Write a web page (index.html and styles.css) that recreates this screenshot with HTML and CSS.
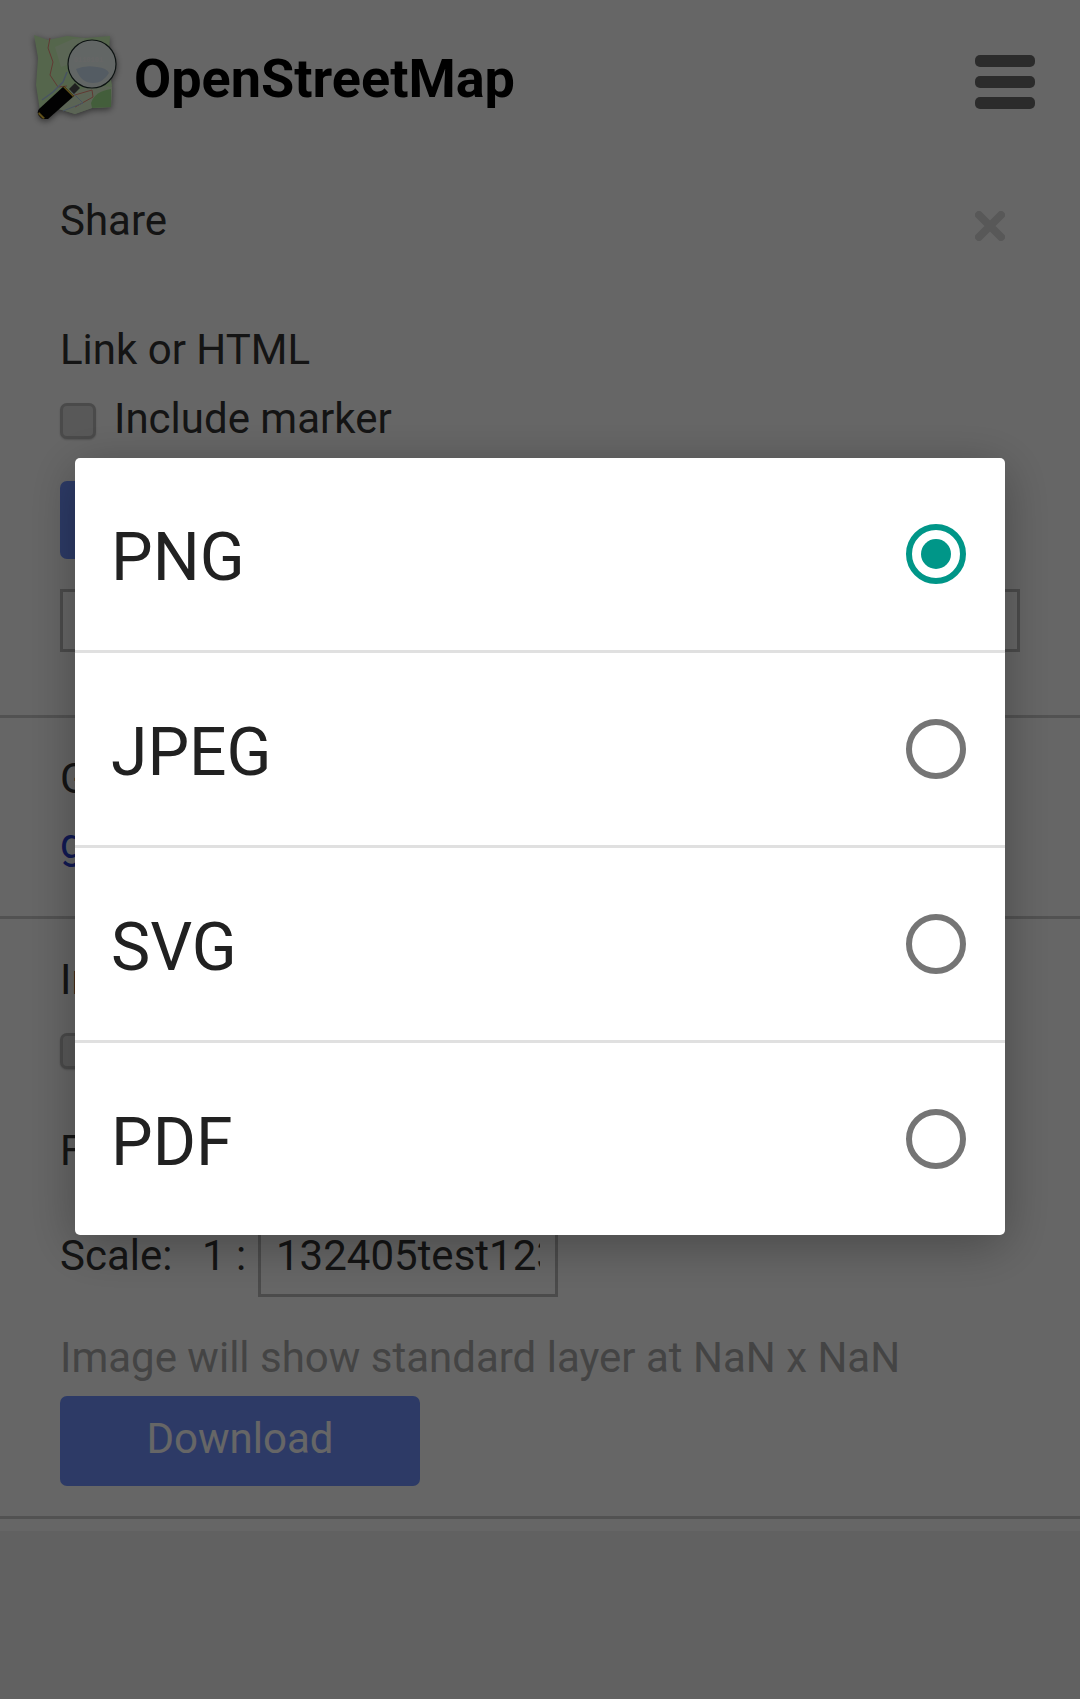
FILE: index.html
```html
<!DOCTYPE html>
<html lang="en">
<head>
<meta charset="UTF-8" />
<meta name="viewport" content="width=device-width, initial-scale=1.0" />
<title>OpenStreetMap</title>
<link rel="stylesheet" href="styles.css">
</head>
<body>

<div class="page">

<header class="top">
  <div class="brand">
    <svg class="logo" viewBox="0 0 84 86" width="84" height="86">
      <path d="M1 2 L15 7 L34 3 L52 5 L77 3 L75 32 L79 52 L78 74 L59 75 L42 81 L22 75 L7 78 L3 52 L5 25 Z" fill="#d4ffbe"/>
      <path d="M22 14 L40 6 L52 5 L40 30 L28 34 Z" fill="#e4ffd4"/>
      <path d="M36 62 L58 52 L79 54 L78 74 L59 75 L42 81 L26 76 Z" fill="#e4fbd4"/>
      <path d="M58 70 Q62 58 78 56 L78 74 L59 75 Z" fill="#a8ec94"/>
      <path d="M17 5 L15 15 L20 29 L17 42 L25 54 L34 53" fill="none" stroke="#f09080" stroke-width="1"/>
      <path d="M35 64 L59 57 L60 64 L42 74" fill="none" stroke="#f09080" stroke-width="1"/>
      <path d="M34 39 L30 49 L20 59 L9 67" fill="none" stroke="#b4d0f4" stroke-width="1.5"/>
      <path d="M38 58 L50 70 L30 78" fill="none" stroke="#b4d0f4" stroke-width="1"/>
      <circle cx="59" cy="31" r="24" fill="#f6fffc" stroke="#20302e" stroke-width="1.2"/>
      <path d="M43 36 Q52 32 64 34 Q74 35 76 40 Q70 50 60 50 Q48 50 43 36 Z" fill="#d2e6f8"/>
      <text class="logo-bits" x="41" y="29">0110101</text>
      <path d="M42 50 L47 55 L41 61 L36 56 Z" fill="#505050"/>
      <path d="M31 53 L41 63 L15 86 Q11 88 7 84 Q3 80 6 76 Z" fill="#060606"/>
      <path d="M31 53 L41 63 L40 64 L30 54 Z" fill="#f0c840"/>
      <path d="M6 79 L12 85 L10 86 L5 81 Z" fill="#f0c840"/>
    </svg>
    <span class="brand-name">OpenStreetMap</span>
  </div>
  <div class="menu-btn">
    <span></span>
    <span></span>
    <span></span>
  </div>
</header>

<section class="panel panel-first">
  <div class="title-row">
    <div class="line">Share</div>
    <svg class="close" viewBox="0 0 30 30" width="30" height="30">
      <path d="M4 4 L26 26 M26 4 L4 26" stroke="#dcdcdc" stroke-width="8" stroke-linecap="round"/>
    </svg>
  </div>
  <div class="line link-title">Link or HTML</div>
  <label class="check-row"><span class="check"></span>Include marker</label>
  <div class="tabs"><div class="btn btn-tabs"></div></div>
  <div class="text-box"></div>
</section>

<section class="panel panel-geo">
  <div class="line">Geo URI</div>
  <div class="line geo-link"><a href="#">geo:0,0?z=0</a></div>
</section>

<section class="panel panel-image">
  <div class="line">Image</div>
  <label class="check-row"><span class="check"></span>Include marker</label>
  <div class="line format-line">Format:</div>
  <div class="scale-row">
    <span class="scale-label">Scale:</span>
    <span class="scale-ratio">1 :</span>
    <div class="scale-input"><div class="scale-value">132405test123</div></div>
  </div>
  <div class="line hint">Image will show standard layer at NaN x NaN</div>
  <button class="btn btn-download">Download</button>
</section>

</div>

<div class="overlay">
  <div class="dialog">
    <div class="option">
      <span class="option-name">PNG</span>
      <span class="radio radio-on"></span>
    </div>
    <div class="option">
      <span class="option-name">JPEG</span>
      <span class="radio"></span>
    </div>
    <div class="option">
      <span class="option-name">SVG</span>
      <span class="radio"></span>
    </div>
    <div class="option">
      <span class="option-name">PDF</span>
      <span class="radio"></span>
    </div>
  </div>
</div>

</body>
</html>
```

FILE: styles.css
```css
* {
  box-sizing: border-box;
}
html, body {
  height: 100%;
}
body {
  margin: 0;
  background-color: #f2f2f2;
  color: #333;
  font-family: Roboto, "Liberation Sans", sans-serif;
  font-size: 42px;
  line-height: 60px;
  overflow: hidden;
}
.page {
  height: 1531px;
  background-color: #fff;
}

/* header */
.top {
  display: flex;
  justify-content: space-between;
  height: 191px;
  padding: 33px 45px 0 33px;
}
.brand {
  display: flex;
  align-items: flex-start;
  gap: 17px;
}
.logo {
  flex: none;
  filter: drop-shadow(0 2px 3px rgba(0,0,0,0.5));
}
.logo-bits {
  fill: #fff;
  font-family: "Liberation Mono", monospace;
  font-size: 7px;
  font-weight: bold;
}
.brand-name {
  font-size: 54px;
  font-weight: bold;
  line-height: 91px;
  color: #000;
}
.menu-btn {
  display: flex;
  flex-direction: column;
  gap: 9px;
  width: 60px;
  padding-top: 22px;
}
.menu-btn span {
  height: 12px;
  border-radius: 5px;
  background-color: #6d6d6d;
}

/* panels */
.panel {
  padding: 0 60px;
  border-bottom: 3px solid #ccc;
}
.panel-first {
  height: 527px;
}
.panel-geo {
  height: 201px;
  padding-top: 31px;
}
.panel-image {
  height: 600px;
  padding-top: 31px;
}
.line {
  height: 60px;
}
.title-row {
  display: flex;
  justify-content: space-between;
  align-items: flex-start;
  padding-right: 15px;
}
.close {
  margin-top: 20px;
}
.link-title {
  margin-top: 69px;
}
.check-row {
  display: flex;
  align-items: center;
  gap: 18px;
  height: 60px;
  margin-top: 9px;
}
.check {
  width: 36px;
  height: 36px;
  margin-top: 4px;
  border: 3px solid #b8b8b8;
  border-radius: 7px;
  background-color: #dcdcdc;
  box-shadow: 0 1px 2px rgba(0,0,0,0.2);
}
.tabs {
  margin-top: 32px;
}
.btn {
  display: block;
  border: none;
  border-radius: 7px;
  background-color: #7092ff;
  color: #fff;
  font-family: inherit;
  font-size: 42px;
}
.btn-tabs {
  width: 360px;
  height: 78px;
}
.text-box {
  height: 63px;
  margin-top: 30px;
  border: 3px solid #bbb;
}
.geo-link {
  margin-top: 5px;
}
.geo-link a {
  color: #2a3fd0;
  text-decoration: none;
}
.format-line {
  margin-top: 42px;
}
.scale-row {
  display: flex;
  align-items: flex-start;
  margin-top: 45px;
}
.scale-label {
  width: 142px;
}
.scale-ratio {
  width: 56px;
}
.scale-input {
  width: 300px;
  height: 71px;
  padding: 0 15px;
  border: 3px solid #bbb;
}
.scale-value {
  line-height: 54px;
  overflow: hidden;
  white-space: nowrap;
}
.hint {
  margin-top: 31px;
  color: #aaa;
}
.btn-download {
  width: 360px;
  height: 90px;
  margin-top: 8px;
  padding: 0 0 4px;
  line-height: 80px;
}

/* format dialog */
.overlay {
  position: fixed;
  top: 0;
  left: 0;
  right: 0;
  bottom: 0;
  display: flex;
  justify-content: center;
  align-items: flex-start;
  padding-top: 458px;
  background-color: rgba(0,0,0,0.6);
}
.dialog {
  width: 930px;
  border-radius: 5px;
  background-color: #fff;
  box-shadow: 0 10px 50px rgba(0,0,0,0.3);
  color: #212121;
  font-size: 66px;
  overflow: hidden;
}
.option {
  display: flex;
  justify-content: space-between;
  align-items: center;
  height: 195px;
  padding: 0 39px 0 36px;
  border-bottom: 3px solid #e0e0e0;
}
.option:last-child {
  height: 192px;
  border-bottom: none;
}
.option-name {
  padding-top: 8px;
}
.radio {
  position: relative;
  width: 60px;
  height: 60px;
  border: 6px solid #757575;
  border-radius: 50%;
}
.radio-on {
  border-color: #009688;
}
.radio-on::after {
  content: "";
  position: absolute;
  top: 9px;
  left: 9px;
  width: 30px;
  height: 30px;
  border-radius: 50%;
  background-color: #009688;
}
```
